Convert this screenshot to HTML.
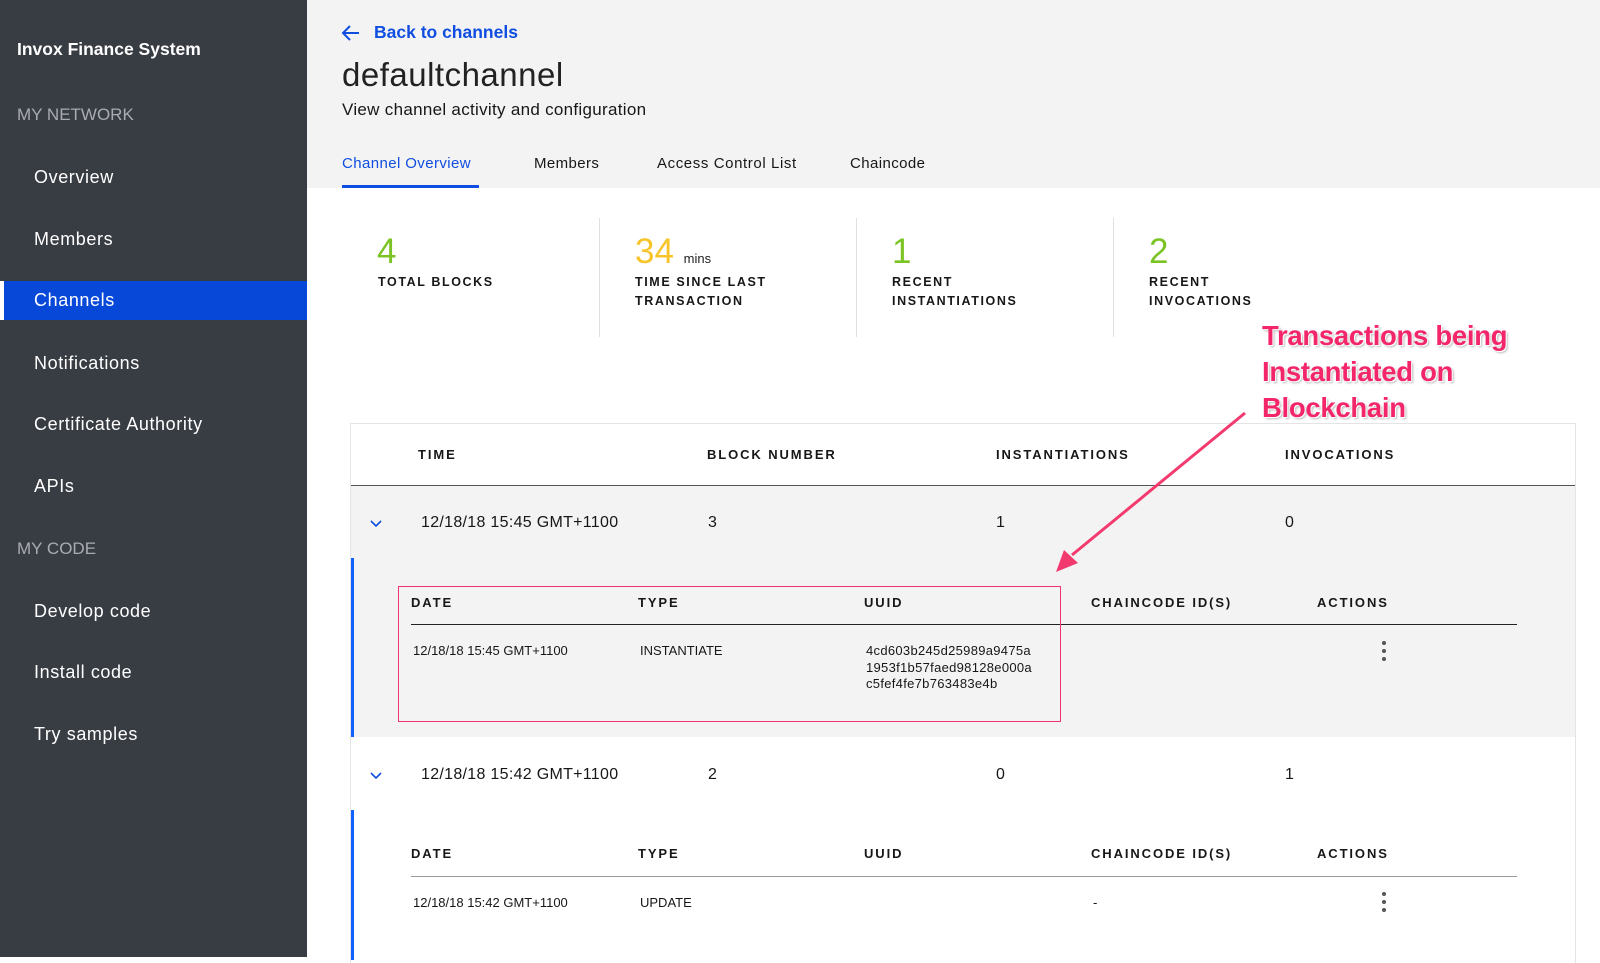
<!DOCTYPE html>
<html><head><meta charset="utf-8"><style>
*{margin:0;padding:0;box-sizing:border-box}
body{width:1600px;height:957px;overflow:hidden;position:relative;font-family:"Liberation Sans",sans-serif;background:#fff;color:#171717}
.a{position:absolute;white-space:nowrap}
#sb{position:absolute;left:0;top:0;width:307px;height:957px;background:#383c43}
.sb1{color:#fff;font-size:18px;left:34px;letter-spacing:0.6px}
.sec{color:#a9acb0;font-size:17px;left:17px}
.h{font-size:13px;font-weight:bold;letter-spacing:1.9px}
.t{font-size:16px;letter-spacing:0.3px}
.s{font-size:13px}
.lbl{font-size:12.5px;font-weight:bold;letter-spacing:1.6px;line-height:19px}
.num{font-size:35px}
</style></head><body>
<div id="sb">
<div class="a" style="left:17px;top:39px;color:#fff;font-weight:bold;font-size:17.5px">Invox Finance System</div>
<div class="a sec" style="top:105px">MY NETWORK</div>
<div class="a sb1" style="top:167px">Overview</div>
<div class="a sb1" style="top:229px">Members</div>
<div style="position:absolute;left:0;top:281px;width:307px;height:39px;background:#0748d8;border-left:4px solid #fff"></div>
<div class="a sb1" style="top:290px">Channels</div>
<div class="a sb1" style="top:353px">Notifications</div>
<div class="a sb1" style="top:414px">Certificate Authority</div>
<div class="a sb1" style="top:476px">APIs</div>
<div class="a sec" style="top:539px">MY CODE</div>
<div class="a sb1" style="top:601px">Develop code</div>
<div class="a sb1" style="top:662px">Install code</div>
<div class="a sb1" style="top:724px">Try samples</div>
</div>
<div style="position:absolute;left:307px;top:0;width:1293px;height:188px;background:#f3f3f3"></div>
<svg class="a" style="left:341px;top:24px" width="20" height="18" viewBox="0 0 20 18"><path d="M18 9H3M9 2L2 9l7 7" fill="none" stroke="#0f4ee0" stroke-width="2"/></svg>
<div class="a" style="left:374px;top:22px;color:#0f4ee0;font-size:17.5px;font-weight:bold">Back to channels</div>
<div class="a" style="left:342px;top:56px;font-size:33px;letter-spacing:0.5px;color:#222">defaultchannel</div>
<div class="a" style="left:342px;top:100px;font-size:17px;letter-spacing:0.3px">View channel activity and configuration</div>
<div class="a" style="left:342px;top:155px;font-size:15px;letter-spacing:0.4px;color:#0f4ee0">Channel Overview</div>
<div style="position:absolute;left:342px;top:185px;width:137px;height:3px;background:#0f4ee0"></div>
<div class="a" style="left:534px;top:155px;font-size:15px;letter-spacing:0.4px">Members</div>
<div class="a" style="left:657px;top:155px;font-size:15px;letter-spacing:0.6px">Access Control List</div>
<div class="a" style="left:850px;top:155px;font-size:15px;letter-spacing:0.4px">Chaincode</div>

<div class="a num" style="left:377px;top:232px;color:#7cc425">4</div>
<div class="a lbl" style="left:378px;top:273px">TOTAL BLOCKS</div>
<div style="position:absolute;left:599px;top:218px;width:1px;height:119px;background:#e0e0e0"></div>
<div class="a num" style="left:635px;top:232px;color:#f7c52b">34 <span style="font-size:13px;color:#222">mins</span></div>
<div class="a lbl" style="left:635px;top:273px">TIME SINCE LAST<br>TRANSACTION</div>
<div style="position:absolute;left:856px;top:218px;width:1px;height:119px;background:#e0e0e0"></div>
<div class="a num" style="left:892px;top:232px;color:#7cc425">1</div>
<div class="a lbl" style="left:892px;top:273px">RECENT<br>INSTANTIATIONS</div>
<div style="position:absolute;left:1113px;top:218px;width:1px;height:119px;background:#e0e0e0"></div>
<div class="a num" style="left:1149px;top:232px;color:#7cc425">2</div>
<div class="a lbl" style="left:1149px;top:273px">RECENT<br>INVOCATIONS</div>

<div style="position:absolute;left:350px;top:423px;width:1226px;height:540px;border:1px solid #e4e4e4;border-bottom:none"></div>
<div class="a h" style="left:418px;top:447px">TIME</div>
<div class="a h" style="left:707px;top:447px">BLOCK NUMBER</div>
<div class="a h" style="left:996px;top:447px">INSTANTIATIONS</div>
<div class="a h" style="left:1285px;top:447px">INVOCATIONS</div>
<div style="position:absolute;left:351px;top:485px;width:1224px;height:1px;background:#555"></div>
<div style="position:absolute;left:351px;top:486px;width:1224px;height:251px;background:#f3f3f3"></div>
<svg class="a" style="left:370px;top:520px" width="12" height="8"><path d="M1 1l5 5 5-5" fill="none" stroke="#0f4ee0" stroke-width="1.6"/></svg>
<div class="a t" style="left:421px;top:514px">12/18/18 15:45 GMT+1100</div>
<div class="a t" style="left:708px;top:514px">3</div>
<div class="a t" style="left:996px;top:514px">1</div>
<div class="a t" style="left:1285px;top:514px">0</div>
<div style="position:absolute;left:351px;top:558px;width:3px;height:179px;background:#0f62fe"></div>
<div class="a h" style="left:411px;top:595px">DATE</div>
<div class="a h" style="left:638px;top:595px">TYPE</div>
<div class="a h" style="left:864px;top:595px">UUID</div>
<div class="a h" style="left:1091px;top:595px">CHAINCODE ID(S)</div>
<div class="a h" style="left:1317px;top:595px">ACTIONS</div>
<div style="position:absolute;left:411px;top:624px;width:1106px;height:1px;background:#222"></div>
<div class="a s" style="left:413px;top:643px">12/18/18 15:45 GMT+1100</div>
<div class="a s" style="left:640px;top:643px">INSTANTIATE</div>
<div class="a s" style="left:866px;top:643px;line-height:16.5px;letter-spacing:0.3px">4cd603b245d25989a9475a<br>1953f1b57faed98128e000a<br>c5fef4fe7b763483e4b</div>
<svg class="a" style="left:1381px;top:640px" width="6" height="22"><circle cx="3" cy="3" r="2" fill="#555"/><circle cx="3" cy="11" r="2" fill="#555"/><circle cx="3" cy="19" r="2" fill="#555"/></svg>
<div style="position:absolute;left:398px;top:586px;width:663px;height:136px;border:1.5px solid #f0336f"></div>

<svg class="a" style="left:370px;top:772px" width="12" height="8"><path d="M1 1l5 5 5-5" fill="none" stroke="#0f4ee0" stroke-width="1.6"/></svg>
<div class="a t" style="left:421px;top:766px">12/18/18 15:42 GMT+1100</div>
<div class="a t" style="left:708px;top:766px">2</div>
<div class="a t" style="left:996px;top:766px">0</div>
<div class="a t" style="left:1285px;top:766px">1</div>
<div style="position:absolute;left:351px;top:810px;width:3px;height:150px;background:#0f62fe"></div>
<div class="a h" style="left:411px;top:846px">DATE</div>
<div class="a h" style="left:638px;top:846px">TYPE</div>
<div class="a h" style="left:864px;top:846px">UUID</div>
<div class="a h" style="left:1091px;top:846px">CHAINCODE ID(S)</div>
<div class="a h" style="left:1317px;top:846px">ACTIONS</div>
<div style="position:absolute;left:411px;top:876px;width:1106px;height:1px;background:#999"></div>
<div class="a s" style="left:413px;top:895px">12/18/18 15:42 GMT+1100</div>
<div class="a s" style="left:640px;top:895px">UPDATE</div>
<div class="a s" style="left:1093px;top:895px">-</div>
<svg class="a" style="left:1381px;top:891px" width="6" height="22"><circle cx="3" cy="3" r="2" fill="#555"/><circle cx="3" cy="11" r="2" fill="#555"/><circle cx="3" cy="19" r="2" fill="#555"/></svg>

<svg class="a" style="left:0;top:0" width="1600" height="957"><path d="M1245 413L1072 555" stroke="#f33a6e" stroke-width="3"/><path d="M1056 572l8-22 14 13z" fill="#f33a6e"/></svg>
<div class="a" style="left:1262px;top:318px;font-size:27.5px;font-weight:bold;color:#f4266a;line-height:36px;text-shadow:1px 1px 0 #fff,2px 2px 2px #bbb;letter-spacing:-0.3px">Transactions being<br>Instantiated on<br>Blockchain</div>
</body></html>
